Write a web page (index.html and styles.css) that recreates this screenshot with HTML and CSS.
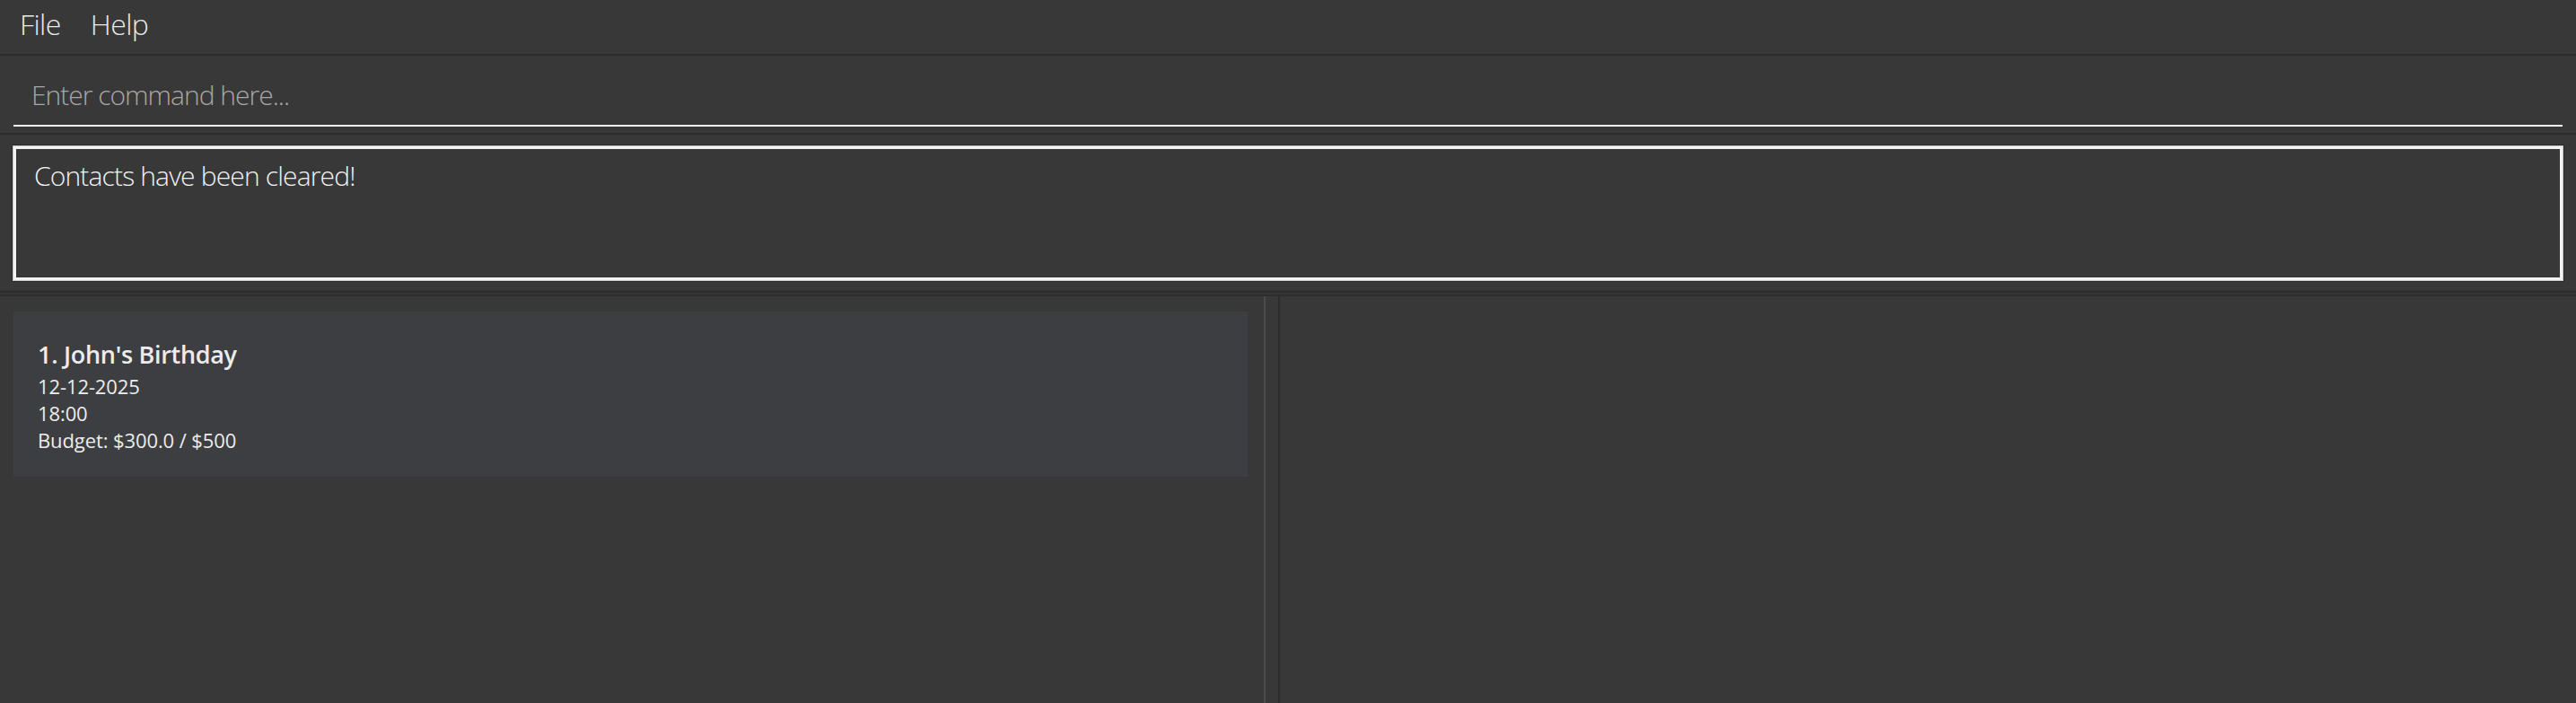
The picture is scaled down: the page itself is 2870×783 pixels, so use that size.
FILE: index.html
```html
<!DOCTYPE html>
<html>
<head>
<meta charset="utf-8">
<title>Event Book</title>
<link rel="stylesheet" href="styles.css">
</head>
<body>
<div class="app">
  <div class="menubar">
    <span class="menu-item">File</span>
    <span class="menu-item">Help</span>
  </div>
  <div class="command-area">
    <div class="command-input">Enter command here...</div>
  </div>
  <div class="result-area">
    <div class="result-box">Contacts have been cleared!</div>
  </div>
  <div class="split-rule"></div>
  <div class="split">
    <div class="list-pane">
      <div class="card">
        <div class="card-title">1. John's Birthday</div>
        <div class="card-line">12-12-2025</div>
        <div class="card-line">18:00</div>
        <div class="card-line">Budget: $300.0 / $500</div>
      </div>
    </div>
    <div class="divider"></div>
    <div class="detail-pane"></div>
  </div>
</div>
</body>
</html>
```

FILE: styles.css
```css
html, body {
  margin: 0;
  padding: 0;
  background: #383838;
}
body {
  width: 2870px;
  height: 783px;
  overflow: hidden;
  font-family: "Open Sans", "Noto Sans", sans-serif;
}
.app {
  display: flex;
  flex-direction: column;
  height: 783px;
}
.menubar {
  height: 60px;
  border-bottom: 2px solid #2c2c2c;
  display: flex;
  align-items: center;
  padding-left: 22px;
  gap: 33px;
  box-sizing: content-box;
}
.menu-item {
  color: #e8e8e8;
  font-size: 32px;
  font-weight: 300;
  letter-spacing: -0.6px;
  line-height: 1;
  margin-top: -6px;
}
.command-area {
  height: 86px;
  border-bottom: 2px solid #2c2c2c;
  padding: 0 15px 0 15px;
  display: flex;
  align-items: flex-end;
}
.command-input {
  flex: 1;
  height: 77px;
  box-sizing: border-box;
  border-bottom: 2px solid #f2f2f2;
  margin-bottom: 7px;
  color: #a7a7a7;
  font-size: 30px;
  font-weight: 300;
  letter-spacing: -1px;
  padding: 0 0 0 20px;
  display: flex;
  align-items: flex-end;
  padding-bottom: 13px;
}
.result-area {
  height: 174px;
  padding: 13px 15px 0 15px;
  box-sizing: border-box;
}
.result-box {
  height: 149px;
  box-sizing: border-box;
  border: 3px solid #f2f2f2;
  box-shadow: 0 0 0 1px #c8c8c8, 0 0 0 2px #2a2a2a;
  color: #f2f2f2;
  font-size: 30px;
  font-weight: 300;
  letter-spacing: -0.85px;
  padding: 10px 0 0 20px;
  line-height: 40px;
}
.split-rule {
  height: 2px;
  border-top: 2px solid #2c2c2c;
  border-bottom: 2px solid #2c2c2c;
  background: #363636;
}
.split {
  flex: 1;
  display: flex;
}
.list-pane {
  width: 1408px;
  padding: 17px 18px 0 15px;
  box-sizing: border-box;
}
.card {
  height: 184px;
  background: #3c3e41;
  box-sizing: border-box;
  padding: 28px 0 0 27px;
  color: #ececec;
}
.card-title {
  font-size: 27px;
  font-weight: 600;
  line-height: 40px;
  letter-spacing: -0.3px;
}
.card-line {
  font-size: 22px;
  line-height: 30px;
  letter-spacing: -0.1px;
}
.divider {
  width: 2px;
  background: #4b4b4b;
  margin-right: 12px;
  border-right: 2px solid #383838;
}
.detail-pane {
  flex: 1;
  border-left: 2px solid #2c2c2c;
}
```
